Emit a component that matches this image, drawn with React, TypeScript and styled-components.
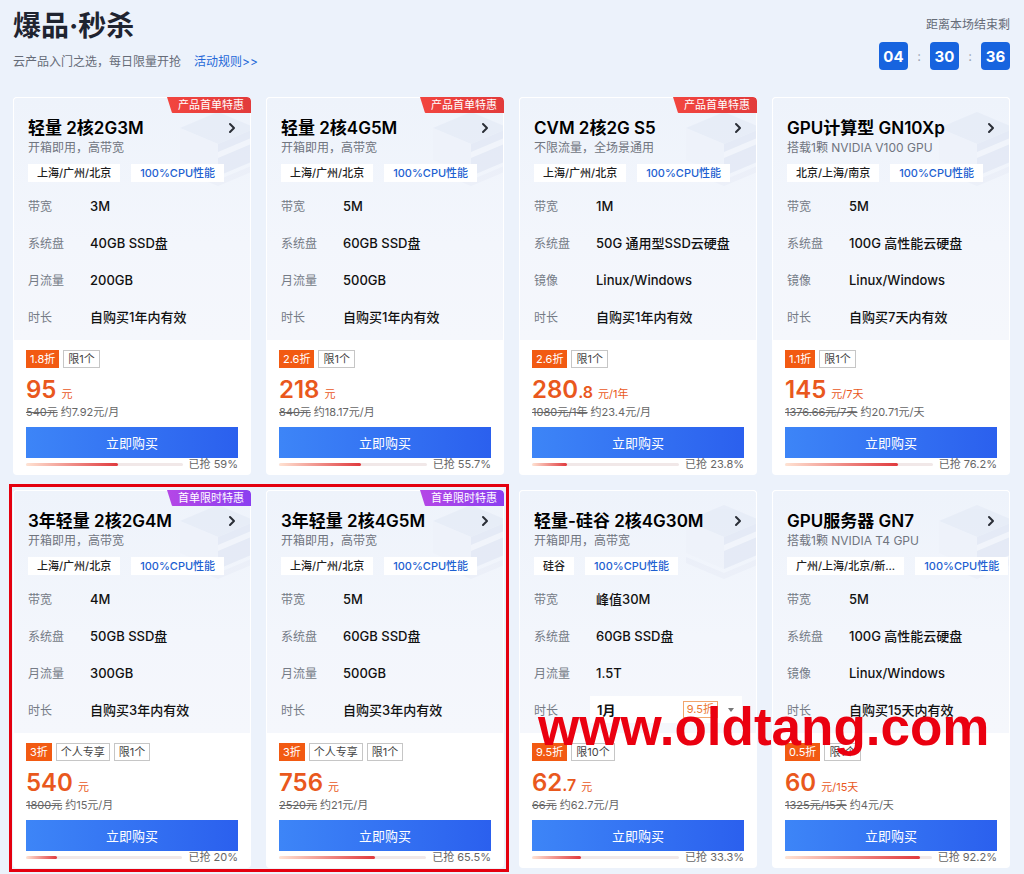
import styled, { createGlobalStyle, css } from "styled-components";

type BadgeKind = "red" | "purple";

type Deal = {
  title: string;
  subtitle: string;
  region: string;
  specs: [string, string][];
  selectDuration?: boolean;
  badge?: BadgeKind;
  discount: string;
  tags: string[];
  priceInt: string;
  priceDec?: string;
  unit: string;
  strike: string;
  approx: string;
  sold: number;
  soldText: string;
};

const deals: Deal[] = [
  {
    title: "轻量 2核2G3M",
    subtitle: "开箱即用，高带宽",
    region: "上海/广州/北京",
    specs: [
      ["带宽", "3M"],
      ["系统盘", "40GB SSD盘"],
      ["月流量", "200GB"],
      ["时长", "自购买1年内有效"],
    ],
    badge: "red",
    discount: "1.8折",
    tags: ["限1个"],
    priceInt: "95",
    unit: "元",
    strike: "540元",
    approx: "约7.92元/月",
    sold: 59,
    soldText: "已抢 59%",
  },
  {
    title: "轻量 2核4G5M",
    subtitle: "开箱即用，高带宽",
    region: "上海/广州/北京",
    specs: [
      ["带宽", "5M"],
      ["系统盘", "60GB SSD盘"],
      ["月流量", "500GB"],
      ["时长", "自购买1年内有效"],
    ],
    badge: "red",
    discount: "2.6折",
    tags: ["限1个"],
    priceInt: "218",
    unit: "元",
    strike: "840元",
    approx: "约18.17元/月",
    sold: 55.7,
    soldText: "已抢 55.7%",
  },
  {
    title: "CVM 2核2G S5",
    subtitle: "不限流量，全场景通用",
    region: "上海/广州/北京",
    specs: [
      ["带宽", "1M"],
      ["系统盘", "50G 通用型SSD云硬盘"],
      ["镜像", "Linux/Windows"],
      ["时长", "自购买1年内有效"],
    ],
    badge: "red",
    discount: "2.6折",
    tags: ["限1个"],
    priceInt: "280",
    priceDec: ".8",
    unit: "元/1年",
    strike: "1080元/1年",
    approx: "约23.4元/月",
    sold: 23.8,
    soldText: "已抢 23.8%",
  },
  {
    title: "GPU计算型 GN10Xp",
    subtitle: "搭载1颗 NVIDIA V100 GPU",
    region: "北京/上海/南京",
    specs: [
      ["带宽", "5M"],
      ["系统盘", "100G 高性能云硬盘"],
      ["镜像", "Linux/Windows"],
      ["时长", "自购买7天内有效"],
    ],
    discount: "1.1折",
    tags: ["限1个"],
    priceInt: "145",
    unit: "元/7天",
    strike: "1376.66元/7天",
    approx: "约20.71元/天",
    sold: 76.2,
    soldText: "已抢 76.2%",
  },
  {
    title: "3年轻量 2核2G4M",
    subtitle: "开箱即用，高带宽",
    region: "上海/广州/北京",
    specs: [
      ["带宽", "4M"],
      ["系统盘", "50GB SSD盘"],
      ["月流量", "300GB"],
      ["时长", "自购买3年内有效"],
    ],
    badge: "purple",
    discount: "3折",
    tags: ["个人专享", "限1个"],
    priceInt: "540",
    unit: "元",
    strike: "1800元",
    approx: "约15元/月",
    sold: 20,
    soldText: "已抢 20%",
  },
  {
    title: "3年轻量 2核4G5M",
    subtitle: "开箱即用，高带宽",
    region: "上海/广州/北京",
    specs: [
      ["带宽", "5M"],
      ["系统盘", "60GB SSD盘"],
      ["月流量", "500GB"],
      ["时长", "自购买3年内有效"],
    ],
    badge: "purple",
    discount: "3折",
    tags: ["个人专享", "限1个"],
    priceInt: "756",
    unit: "元",
    strike: "2520元",
    approx: "约21元/月",
    sold: 65.5,
    soldText: "已抢 65.5%",
  },
  {
    title: "轻量-硅谷 2核4G30M",
    subtitle: "开箱即用，高带宽",
    region: "硅谷",
    specs: [
      ["带宽", "峰值30M"],
      ["系统盘", "60GB SSD盘"],
      ["月流量", "1.5T"],
      ["时长", "1月"],
    ],
    selectDuration: true,
    discount: "9.5折",
    tags: ["限10个"],
    priceInt: "62",
    priceDec: ".7",
    unit: "元",
    strike: "66元",
    approx: "约62.7元/月",
    sold: 33.3,
    soldText: "已抢 33.3%",
  },
  {
    title: "GPU服务器 GN7",
    subtitle: "搭载1颗 NVIDIA T4 GPU",
    region: "广州/上海/北京/新...",
    specs: [
      ["带宽", "5M"],
      ["系统盘", "100G 高性能云硬盘"],
      ["镜像", "Linux/Windows"],
      ["时长", "自购买15天内有效"],
    ],
    discount: "0.5折",
    tags: ["限1个"],
    priceInt: "60",
    unit: "元/15天",
    strike: "1325元/15天",
    approx: "约4元/天",
    sold: 92.2,
    soldText: "已抢 92.2%",
  },
];

const GlobalStyle = createGlobalStyle`
  html, body {
    margin: 0;
    padding: 0;
    background: #ecf2fb;
  }
  body {
    font-family: Inter, "Noto Sans CJK SC", sans-serif;
    color: #1a1a1a;
  }
`;

const Page = styled.div`
  position: relative;
  width: 1024px;
  height: 874px;
  box-sizing: border-box;
  padding: 0 14px 0 13px;
  overflow: hidden;
  background: #ecf2fb;
`;

const Header = styled.div`
  height: 97px;
  display: flex;
  justify-content: space-between;
  align-items: flex-start;
`;

const TitleBlock = styled.div`
  display: flex;
  flex-direction: column;
`;

const PageTitle = styled.h1`
  margin: 10px 0 0 0;
  font-size: 28px;
  line-height: 32px;
  font-weight: 700;
  color: #1f2430;
`;

const Intro = styled.div`
  margin-top: 11px;
  font-size: 12px;
  line-height: 18px;
  color: #666c78;
  display: flex;
  gap: 13px;
`;

const RulesLink = styled.a`
  color: #2468d8;
  text-decoration: none;
`;

const TimerBlock = styled.div`
  display: flex;
  flex-direction: column;
  align-items: flex-end;
  padding-top: 17px;
`;

const TimerLabel = styled.div`
  font-size: 12px;
  line-height: 16px;
  color: #666c78;
`;

const TimerRow = styled.div`
  margin-top: 9px;
  display: flex;
  align-items: center;
`;

const TimeBox = styled.div`
  width: 29px;
  height: 28px;
  border-radius: 4px;
  background: #1764df;
  color: #fff;
  font-size: 15px;
  font-weight: 700;
  display: flex;
  align-items: center;
  justify-content: center;
`;

const Colon = styled.span`
  width: 22px;
  text-align: center;
  color: #9aa3b2;
  font-size: 13px;
`;

const Grid = styled.div`
  display: grid;
  grid-template-columns: repeat(4, 238px);
  grid-auto-rows: 378px;
  column-gap: 15px;
  row-gap: 15px;
`;

const Card = styled.div`
  position: relative;
  display: flex;
  flex-direction: column;
  background: #fff;
  border-radius: 4px;
  overflow: hidden;
`;

const Head = styled.div`
  position: relative;
  height: 243px;
  box-sizing: border-box;
  padding: 18px 14px 6px 14px;
  background: linear-gradient(180deg, #eef3fb 0%, #f3f6fc 60%, #f5f7fc 100%);
  border: 1px solid #fff;
  border-bottom: none;
  border-radius: 4px 4px 0 0;
`;

const Decoration = styled.svg`
  position: absolute;
  top: 0;
  right: 0;
  pointer-events: none;
`;

const TitleRow = styled.div`
  position: relative;
  display: flex;
  align-items: center;
  justify-content: space-between;
  height: 24px;
`;

const CardTitle = styled.div`
  font-size: 17px;
  line-height: 24px;
  font-weight: 600;
  color: #000;
  white-space: nowrap;
`;

const Subtitle = styled.div`
  position: relative;
  font-size: 12px;
  line-height: 16px;
  color: #70757f;
`;

const TagRow = styled.div`
  position: relative;
  margin-top: 8px;
  display: flex;
  gap: 11px;
`;

const InfoTag = styled.span<{ $accent?: boolean }>`
  height: 18px;
  line-height: 18px;
  padding: 0 9px;
  background: #fff;
  font-size: 11px;
  font-weight: 500;
  white-space: nowrap;
  color: ${({ $accent }) => ($accent ? "#1d5fd1" : "#1f1f1f")};
`;

const SpecList = styled.div`
  position: relative;
  margin-top: 5px;
  display: flex;
  flex-direction: column;
`;

const SpecRow = styled.div`
  height: 37px;
  display: flex;
  align-items: center;
`;

const SpecLabel = styled.span`
  width: 62px;
  flex-shrink: 0;
  font-size: 12px;
  color: #757b86;
`;

const SpecValue = styled.span`
  font-size: 13px;
  font-weight: 500;
  color: #111;
  white-space: nowrap;
`;

const DurationSelect = styled.div`
  margin-left: -6px;
  width: 157px;
  height: 27px;
  box-sizing: border-box;
  padding: 0 8px 0 7px;
  background: #fff;
  display: flex;
  align-items: center;
  gap: 6px;
`;

const SelectText = styled.span`
  flex: 1;
  font-size: 13px;
  font-weight: 600;
  color: #111;
`;

const OutlineDiscount = styled.span`
  height: 15px;
  line-height: 15px;
  padding: 0 3px;
  border: 1px solid #f2a66d;
  color: #ec7a32;
  font-size: 11px;
`;

const Caret = styled.span`
  width: 0;
  height: 0;
  border-left: 3.5px solid transparent;
  border-right: 3.5px solid transparent;
  border-top: 4px solid #777;
  margin-left: 4px;
`;

const Badge = styled.div<{ $kind: BadgeKind }>`
  position: absolute;
  top: 0;
  right: 0;
  z-index: 2;
  height: 16px;
  line-height: 16px;
  padding: 0 7px 0 11px;
  font-size: 11px;
  color: #fff;
  border-radius: 0 4px 0 6px;
  clip-path: polygon(0 0, 100% 0, 100% 100%, 5px 100%);
  ${({ $kind }) =>
    $kind === "red"
      ? css`
          background: linear-gradient(90deg, #f2453f, #e23b3b);
        `
      : css`
          background: linear-gradient(90deg, #b547e6, #8a3ef0);
        `}
`;

const Foot = styled.div`
  flex: 1;
  box-sizing: border-box;
  padding: 10px 13px 5px 13px;
  display: flex;
  flex-direction: column;
`;

const SaleTags = styled.div`
  display: flex;
  gap: 4px;
  height: 18px;
`;

const DiscountTag = styled.span`
  height: 18px;
  line-height: 18px;
  padding: 0 4px;
  background: #f25a12;
  color: #fff;
  font-size: 11px;
`;

const LimitTag = styled.span`
  height: 18px;
  line-height: 16px;
  box-sizing: border-box;
  padding: 0 4px;
  border: 1px solid #c6c6c6;
  color: #444;
  background: #fff;
  font-size: 11px;
`;

const PriceLine = styled.div`
  margin-top: 8px;
  height: 28px;
  display: flex;
  align-items: baseline;
  color: #e9581d;
`;

const PriceInt = styled.span`
  font-size: 24px;
  line-height: 28px;
  font-weight: 600;
`;

const PriceDec = styled.span`
  font-size: 16px;
  font-weight: 600;
`;

const PriceUnit = styled.span`
  margin-left: 5px;
  font-size: 11px;
`;

const OrigLine = styled.div`
  height: 16px;
  line-height: 16px;
  font-size: 11px;
  color: #666;
  white-space: nowrap;
`;

const Strike = styled.s`
  margin-right: 3px;
`;

const BuyButton = styled.button`
  margin-top: 7px;
  height: 31px;
  width: 100%;
  border: none;
  padding: 0;
  background: linear-gradient(90deg, #3d85f7 0%, #2b60ee 100%);
  color: #fff;
  font-family: inherit;
  font-size: 13px;
  cursor: pointer;
`;

const ProgressRow = styled.div`
  height: 12px;
  display: flex;
  align-items: center;
  gap: 6px;
`;

const Track = styled.div`
  flex: 1;
  height: 3px;
  border-radius: 2px;
  background: #f1e8e8;
  overflow: hidden;
`;

const Fill = styled.div`
  height: 100%;
  border-radius: 2px;
  background: linear-gradient(90deg, #ffe3d3, #e0393d);
`;

const SoldText = styled.span`
  flex-shrink: 0;
  font-size: 11px;
  line-height: 12px;
  color: #666;
  white-space: nowrap;
`;

const Highlight = styled.div`
  position: absolute;
  left: 9px;
  top: 484px;
  width: 500px;
  height: 388px;
  box-sizing: border-box;
  border: 3px solid #e4000f;
  pointer-events: none;
`;

const Watermark = styled.div`
  position: absolute;
  left: 538px;
  top: 697px;
  font-family: "Liberation Sans", Arial, sans-serif;
  font-size: 53px;
  line-height: 60px;
  font-weight: 700;
  color: #ea0010;
  white-space: nowrap;
  pointer-events: none;
`;

function Chevron() {
  return (
    <svg width="8" height="12" viewBox="0 0 8 12">
      <path d="M2 2 L6 6 L2 10" fill="none" stroke="#2a2e36" strokeWidth="2" strokeLinecap="round" strokeLinejoin="round" />
    </svg>
  );
}

function Cube() {
  return (
    <Decoration width="72" height="100" viewBox="0 0 72 100">
      <g opacity="0.45">
        <polygon points="40,14 78,30 40,46 2,30" fill="#dfe6f4" />
        <polygon points="2,30 40,46 40,78 2,62" fill="#edf1f9" />
        <polygon points="40,46 78,30 78,62 40,78" fill="#d8e0f0" />
        <polygon points="40,54 78,38 78,44 40,60" fill="#ffffff" opacity="0.7" />
        <polygon points="2,66 40,82 78,66 78,72 40,88 2,72" fill="#e6ebf6" />
      </g>
    </Decoration>
  );
}

function DealCard({ deal }: { deal: Deal }) {
  return (
    <Card>
      {deal.badge && <Badge $kind={deal.badge}>{deal.badge === "red" ? "产品首单特惠" : "首单限时特惠"}</Badge>}
      <Head>
        <Cube />
        <TitleRow>
          <CardTitle>{deal.title}</CardTitle>
          <Chevron />
        </TitleRow>
        <Subtitle>{deal.subtitle}</Subtitle>
        <TagRow>
          <InfoTag>{deal.region}</InfoTag>
          <InfoTag $accent>100%CPU性能</InfoTag>
        </TagRow>
        <SpecList>
          {deal.specs.map(([label, value], i) => (
            <SpecRow key={label}>
              <SpecLabel>{label}</SpecLabel>
              {deal.selectDuration && i === deal.specs.length - 1 ? (
                <DurationSelect>
                  <SelectText>{value}</SelectText>
                  <OutlineDiscount>{deal.discount}</OutlineDiscount>
                  <Caret />
                </DurationSelect>
              ) : (
                <SpecValue>{value}</SpecValue>
              )}
            </SpecRow>
          ))}
        </SpecList>
      </Head>
      <Foot>
        <SaleTags>
          <DiscountTag>{deal.discount}</DiscountTag>
          {deal.tags.map((t) => (
            <LimitTag key={t}>{t}</LimitTag>
          ))}
        </SaleTags>
        <PriceLine>
          <PriceInt>{deal.priceInt}</PriceInt>
          {deal.priceDec && <PriceDec>{deal.priceDec}</PriceDec>}
          <PriceUnit>{deal.unit}</PriceUnit>
        </PriceLine>
        <OrigLine>
          <Strike>{deal.strike}</Strike>
          {deal.approx}
        </OrigLine>
        <BuyButton>立即购买</BuyButton>
        <ProgressRow>
          <Track>
            <Fill style={{ width: `${deal.sold}%` }} />
          </Track>
          <SoldText>{deal.soldText}</SoldText>
        </ProgressRow>
      </Foot>
    </Card>
  );
}

export default function App() {
  return (
    <>
      <GlobalStyle />
      <Page>
        <Header>
          <TitleBlock>
            <PageTitle>爆品·秒杀</PageTitle>
            <Intro>
              <span>云产品入门之选，每日限量开抢</span>
              <RulesLink>活动规则&gt;&gt;</RulesLink>
            </Intro>
          </TitleBlock>
          <TimerBlock>
            <TimerLabel>距离本场结束剩</TimerLabel>
            <TimerRow>
              <TimeBox>04</TimeBox>
              <Colon>:</Colon>
              <TimeBox>30</TimeBox>
              <Colon>:</Colon>
              <TimeBox>36</TimeBox>
            </TimerRow>
          </TimerBlock>
        </Header>
        <Grid>
          {deals.map((d) => (
            <DealCard key={d.title} deal={d} />
          ))}
        </Grid>
        <Highlight />
        <Watermark>www.oldtang.com</Watermark>
      </Page>
    </>
  );
}
